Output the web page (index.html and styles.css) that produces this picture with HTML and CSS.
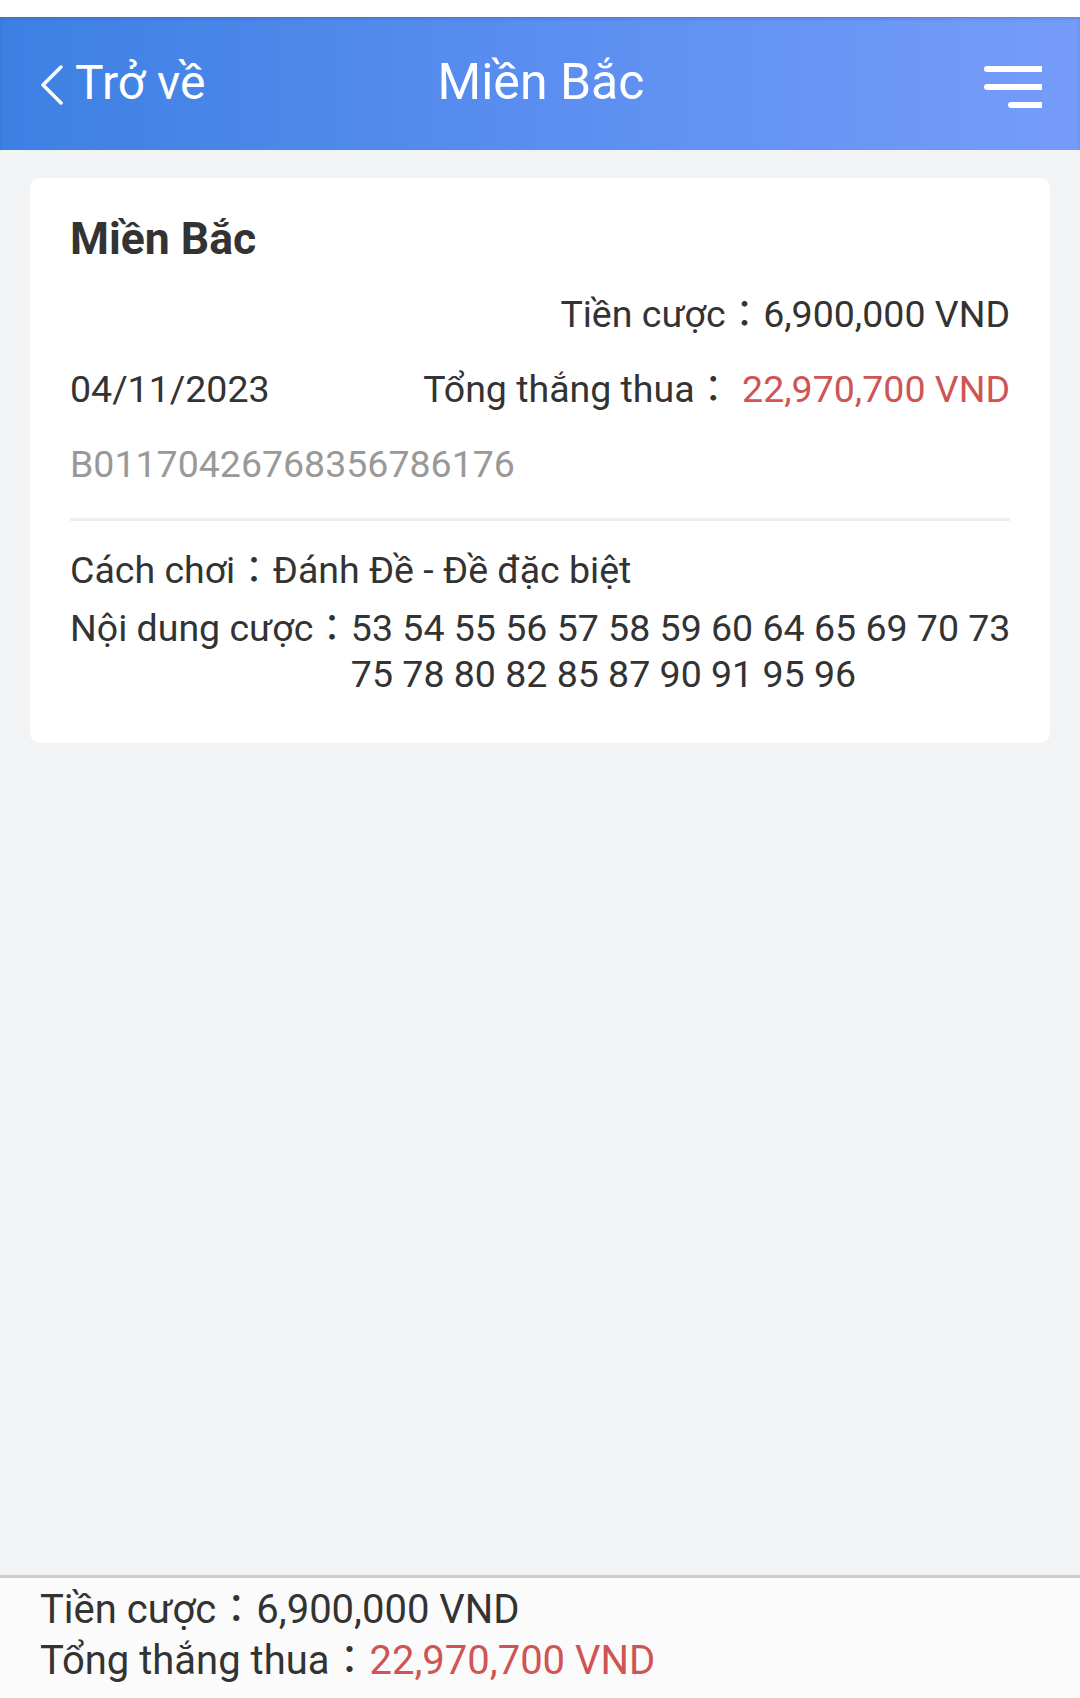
FILE: index.html
```html
<!DOCTYPE html>
<html lang="vi">
<head>
    <meta charset="UTF-8">
    <meta name="viewport" content="width=device-width, initial-scale=1.0">
    <title>Miền Bắc</title>
    <link rel="stylesheet" href="styles.css">
</head>
<body>

<div class="status-strip"></div>

<!-- thanh tiêu đề -->
<header class="topbar">
    <a class="back-link" href="#">
        <svg class="back-icon" width="24" height="40" viewBox="0 0 24 40">
            <polyline points="21,2 3,20 21,38" fill="none" stroke="#fff" stroke-width="3.5" stroke-linecap="round" stroke-linejoin="round"/>
        </svg>
        <span>Trở về</span>
    </a>
    <h1 class="topbar-title">Miền Bắc</h1>
    <button class="menu-btn" type="button">
        <svg width="58" height="42" viewBox="0 0 58 42">
            <line x1="3" y1="3" x2="58" y2="3" stroke="#fff" stroke-width="6" stroke-linecap="round"/>
            <line x1="3" y1="21" x2="58" y2="21" stroke="#fff" stroke-width="6" stroke-linecap="round"/>
            <line x1="27" y1="39" x2="58" y2="39" stroke="#fff" stroke-width="6" stroke-linecap="round"/>
        </svg>
    </button>
</header>

<main class="content">
    <section class="bet-card">
        <h2 class="bet-region">Miền Bắc</h2>

        <div class="bet-row bet-row-end">
            <span>Tiền cược：6,900,000 VND</span>
        </div>
        <div class="bet-row">
            <span>04/11/2023</span>
            <span>Tổng thắng thua：<span class="amount-red amount-gap">22,970,700 VND</span></span>
        </div>
        <div class="bet-row bet-code">B01170426768356786176</div>

        <hr class="bet-divider">

        <div class="bet-detail bet-detail-first">
            <span class="detail-label">Cách chơi：</span>
            <span class="detail-value">Đánh Đề - Đề đặc biệt</span>
        </div>
        <div class="bet-detail">
            <span class="detail-label">Nội dung cược：</span>
            <span class="detail-value">53 54 55 56 57 58 59 60 64 65 69 70 73 75 78 80 82 85 87 90 91 95 96</span>
        </div>
    </section>
</main>

<!-- tổng kết -->
<footer class="summary">
    <div class="summary-line">Tiền cược：6,900,000 VND</div>
    <div class="summary-line">Tổng thắng thua：<span class="amount-red">22,970,700 VND</span></div>
</footer>

</body>
</html>
```

FILE: styles.css
```css
body {
    font-family: Roboto, "Noto Sans CJK TC", sans-serif;
    background: #f2f3f5;
    color: #333;
    margin: 0;
    padding: 0;
    min-height: 100vh;
    display: flex;
    flex-direction: column;
}

.status-strip {
    height: 17px;
    background: #fff;
}

.topbar {
    height: 133px;
    display: grid;
    grid-template-columns: 1fr auto 1fr;
    align-items: center;
    padding: 0 38px 0 40px;
    background: linear-gradient(to right, #3d80e3, #5a8ef0 50%, #769cfb);
    box-shadow: inset 0 2px 3px rgba(40, 70, 140, 0.25);
    color: #fff;
}

.back-link {
    display: flex;
    align-items: center;
    gap: 11px;
    color: #fff;
    text-decoration: none;
    font-size: 48px;
    margin-top: -2px;
}

.back-icon {
    margin-top: 4px;
}

.topbar-title {
    margin: 0;
    font-size: 50px;
    font-weight: 400;
    margin-top: -3px;
}

.menu-btn {
    justify-self: end;
    background: none;
    border: none;
    padding: 0;
    display: flex;
    margin-top: 6px;
}

.content {
    flex: 1;
    padding: 28px 30px;
}

.bet-card {
    background: #fff;
    border-radius: 10px;
    padding: 31px 40px 46px;
    font-size: 37.5px;
}

.bet-region {
    margin: 0 0 8px;
    font-size: 44.5px;
    font-weight: 700;
    line-height: 60px;
    color: #333;
}

.bet-row {
    display: flex;
    justify-content: space-between;
    line-height: 75px;
}

.bet-row-end {
    justify-content: flex-end;
}

.bet-code {
    color: #999;
}

.amount-red {
    color: #cf5454;
}

.amount-gap {
    margin-left: 10px;
}

.bet-divider {
    border: none;
    height: 3px;
    background: #eee;
    margin: 16px 0 0;
}

.bet-detail {
    display: flex;
    line-height: 46px;
    margin-right: -20px;
}

.bet-detail-first {
    margin-top: 26px;
    margin-bottom: 12px;
}

.detail-label {
    flex: none;
}

.detail-value {
    flex: 1;
}

.summary {
    background: #fbfbfb;
    border-top: 3px solid #cdcdcd;
    padding: 6px 40px 12px;
    font-size: 40px;
}

.summary-line {
    line-height: 51px;
}
```
